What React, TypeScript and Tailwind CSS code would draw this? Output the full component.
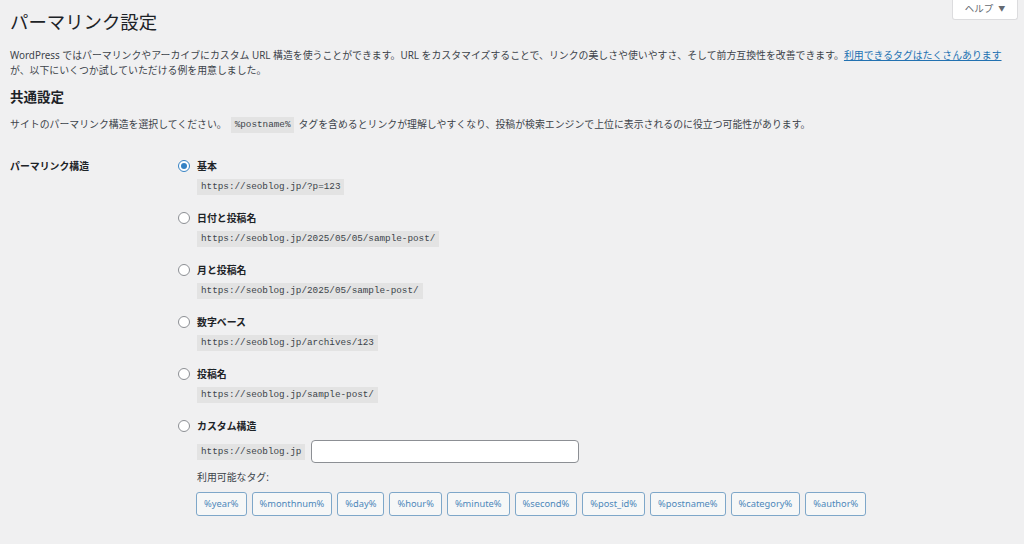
import React from "react";

const options = [
  { label: "基本", code: "https://seoblog.jp/?p=123", checked: true },
  { label: "日付と投稿名", code: "https://seoblog.jp/2025/05/05/sample-post/" },
  { label: "月と投稿名", code: "https://seoblog.jp/2025/05/sample-post/" },
  { label: "数字ベース", code: "https://seoblog.jp/archives/123" },
  { label: "投稿名", code: "https://seoblog.jp/sample-post/" },
];

const tags = [
  "%year%",
  "%monthnum%",
  "%day%",
  "%hour%",
  "%minute%",
  "%second%",
  "%post_id%",
  "%postname%",
  "%category%",
  "%author%",
];

function Radio({ checked }: { checked?: boolean }) {
  return (
    <span
      className={
        checked
          ? "w-[12px] h-[12px] rounded-full border border-[#3582c4] bg-white flex items-center justify-center shrink-0"
          : "w-[12px] h-[12px] rounded-full border border-[#8c8f94] bg-white shrink-0"
      }
    >
      {checked && <span className="w-[6px] h-[6px] rounded-full bg-[#3582c4]" />}
    </span>
  );
}

function Code({ children }: { children: React.ReactNode }) {
  return (
    <code className="inline-block bg-[#e3e3e3] px-[4px] h-[16px] leading-[16px] text-[9.3px] text-[#3c434a] font-['Liberation_Mono',monospace]">
      {children}
    </code>
  );
}

export default function App() {
  return (
    <div className="relative w-full h-[544px] overflow-hidden bg-[#f0f0f1] px-[10px] text-[#3c434a] text-[9.9px] font-['Noto_Sans','Noto_Sans_CJK_JP',sans-serif]">
      {/* help tab */}
      <div className="absolute top-0 right-[6px] w-[66px] h-[20px] bg-white border border-t-0 border-[#dcdcde] rounded-b-[3px] flex items-center justify-center gap-[5px] text-[9.5px] text-[#646970]">
        <span>ヘルプ</span>
        <span className="text-[7px]">▼</span>
      </div>

      <h1 className="pt-[9px] text-[18.4px] leading-[26px] text-[#1d2327]">パーマリンク設定</h1>

      <p className="mt-[13px] leading-[15px]">
        WordPress ではパーマリンクやアーカイブにカスタム URL 構造を使うことができます。URL をカスタマイズすることで、リンクの美しさや使いやすさ、そして前方互換性を改善できます。
        <a href="#" className="text-[#2271b1] underline">利用できるタグはたくさんあります</a>
        が、以下にいくつか試していただける例を用意しました。
      </p>

      <h2 className="mt-[9px] text-[13.5px] leading-[20px] font-bold text-[#1d2327]">共通設定</h2>

      <p className="mt-[8px] leading-[16px] flex items-center">
        <span>サイトのパーマリンク構造を選択してください。</span>
        <span className="mx-[4px]"><Code>%postname%</Code></span>
        <span>タグを含めるとリンクが理解しやすくなり、投稿が検索エンジンで上位に表示されるのに役立つ可能性があります。</span>
      </p>

      <div className="mt-[25px] flex">
        <div className="w-[168px] shrink-0 font-bold text-[#1d2327] leading-[16px]">パーマリンク構造</div>
        <div className="flex flex-col">
          {options.map((o) => (
            <div key={o.label} className="flex flex-col mb-[15px]">
              <div className="flex items-center gap-[7px] h-[16px] font-bold text-[#1d2327]">
                <Radio checked={o.checked} />
                <span>{o.label}</span>
              </div>
              <div className="mt-[5px] pl-[19px] h-[16px] flex">
                <Code>{o.code}</Code>
              </div>
            </div>
          ))}
          <div className="flex flex-col">
            <div className="flex items-center gap-[7px] h-[16px] font-bold text-[#1d2327]">
              <Radio />
              <span>カスタム構造</span>
            </div>
            <div className="mt-[6px] pl-[19px] flex items-center gap-[6px]">
              <Code>https://seoblog.jp</Code>
              <input
                type="text"
                className="w-[268px] h-[23px] bg-white border border-[#8c8f94] rounded-[4px] outline-none"
              />
            </div>
            <div className="mt-[4px] pl-[19px] leading-[20px]">利用可能なタグ:</div>
            <div className="mt-[5px] pl-[18px] flex gap-[5px]">
              {tags.map((t) => (
                <span
                  key={t}
                  className="h-[24px] px-[7px] flex items-center bg-[#f6f7f7] border border-[#7ea7c9] rounded-[3px] text-[#4d87ba] text-[9.3px]"
                >
                  {t}
                </span>
              ))}
            </div>
          </div>
        </div>
      </div>
    </div>
  );
}
